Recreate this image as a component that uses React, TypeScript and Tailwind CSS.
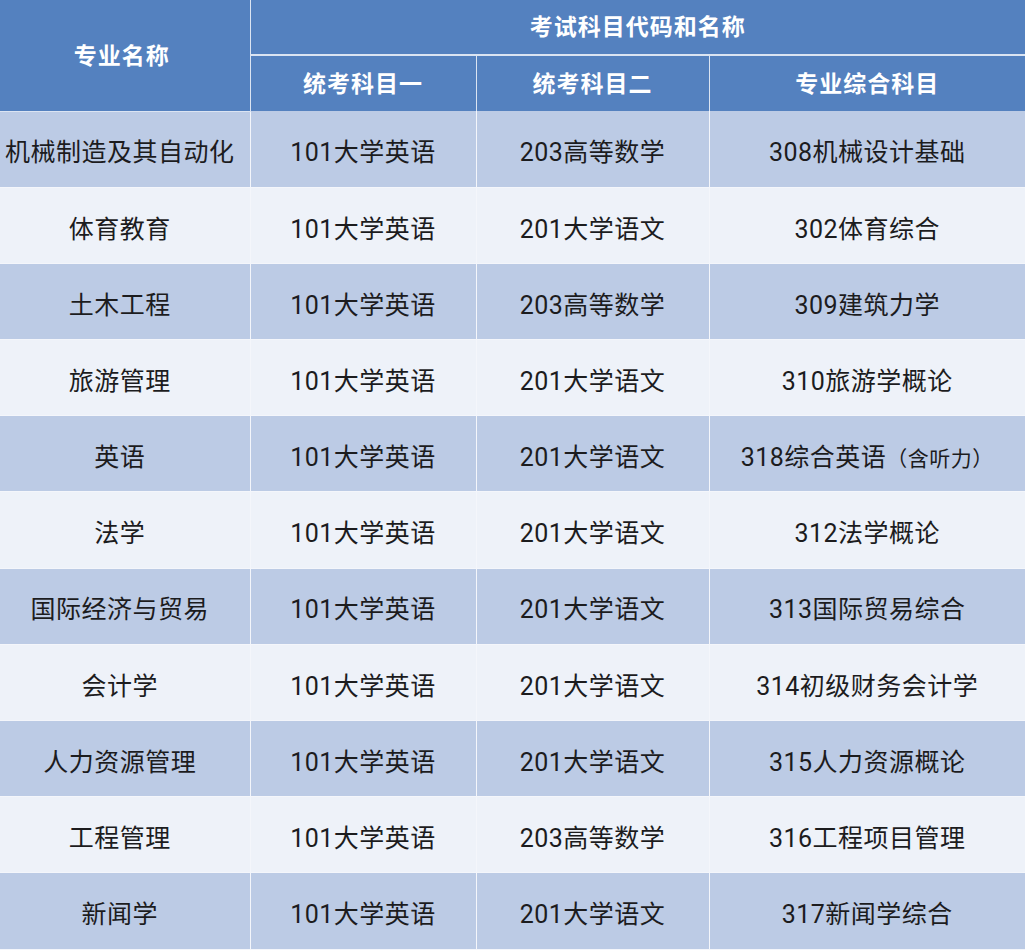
const rows: [string, string, string, string][] = [
  ["机械制造及其自动化", "101大学英语", "203高等数学", "308机械设计基础"],
  ["体育教育", "101大学英语", "201大学语文", "302体育综合"],
  ["土木工程", "101大学英语", "203高等数学", "309建筑力学"],
  ["旅游管理", "101大学英语", "201大学语文", "310旅游学概论"],
  ["英语", "101大学英语", "201大学语文", "318综合英语（含听力）"],
  ["法学", "101大学英语", "201大学语文", "312法学概论"],
  ["国际经济与贸易", "101大学英语", "201大学语文", "313国际贸易综合"],
  ["会计学", "101大学英语", "201大学语文", "314初级财务会计学"],
  ["人力资源管理", "101大学英语", "201大学语文", "315人力资源概论"],
  ["工程管理", "101大学英语", "203高等数学", "316工程项目管理"],
  ["新闻学", "101大学英语", "201大学语文", "317新闻学综合"],
];

function Last({ text }: { text: string }) {
  // the bracket note is a bit smaller in the picture
  const i = text.indexOf("（");
  if (i < 0) return <>{text}</>;
  return (
    <>
      {text.slice(0, i)}
      <span className="text-[21px]">{text.slice(i)}</span>
    </>
  );
}

export default function App() {
  return (
    <div className="w-[1025px] h-[950px] overflow-hidden bg-white font-['Roboto','Noto_Sans_CJK_SC',sans-serif]">
      <table className="w-[1025px] border-collapse table-fixed">
        <colgroup>
          <col className="w-[250px]" />
          <col className="w-[226px]" />
          <col className="w-[233px]" />
          <col className="w-[316px]" />
        </colgroup>
        <thead>
          <tr className="h-[55px] bg-[#5481bf] text-white text-[23px] font-bold tracking-[1px]">
            <th rowSpan={2} className="border-r border-b border-[#dbe4f2] align-middle pt-1 pr-[6px]">
              专业名称
            </th>
            <th colSpan={3} className="border-b-2 border-[#dbe4f2] align-middle pt-[2px]">
              考试科目代码和名称
            </th>
          </tr>
          <tr className="h-[56px] bg-[#5481bf] text-white text-[23px] font-bold tracking-[1px]">
            <th className="border-r border-[#dbe4f2] pt-1">统考科目一</th>
            <th className="border-r border-[#dbe4f2] pt-1">统考科目二</th>
            <th className="pt-1">专业综合科目</th>
          </tr>
        </thead>
        <tbody>
          {rows.map((r, idx) => (
            <tr
              key={idx}
              className={`h-[76.2px] text-[25px] text-[#1c1c1e] tracking-[0.5px] ${
                idx % 2 === 0 ? "bg-[#bccbe5]" : "bg-[#eef2f9]"
              }`}
            >
              <td className="text-center border-r border-b border-[#f4f6fb] pt-2 pr-[10px] whitespace-nowrap">{r[0]}</td>
              <td className="text-center border-r border-b border-[#f4f6fb] pt-2">{r[1]}</td>
              <td className="text-center border-r border-b border-[#f4f6fb] pt-2">{r[2]}</td>
              <td className="text-center border-b border-[#f4f6fb] pt-2 whitespace-nowrap">
                <Last text={r[3]} />
              </td>
            </tr>
          ))}
        </tbody>
      </table>
    </div>
  );
}
